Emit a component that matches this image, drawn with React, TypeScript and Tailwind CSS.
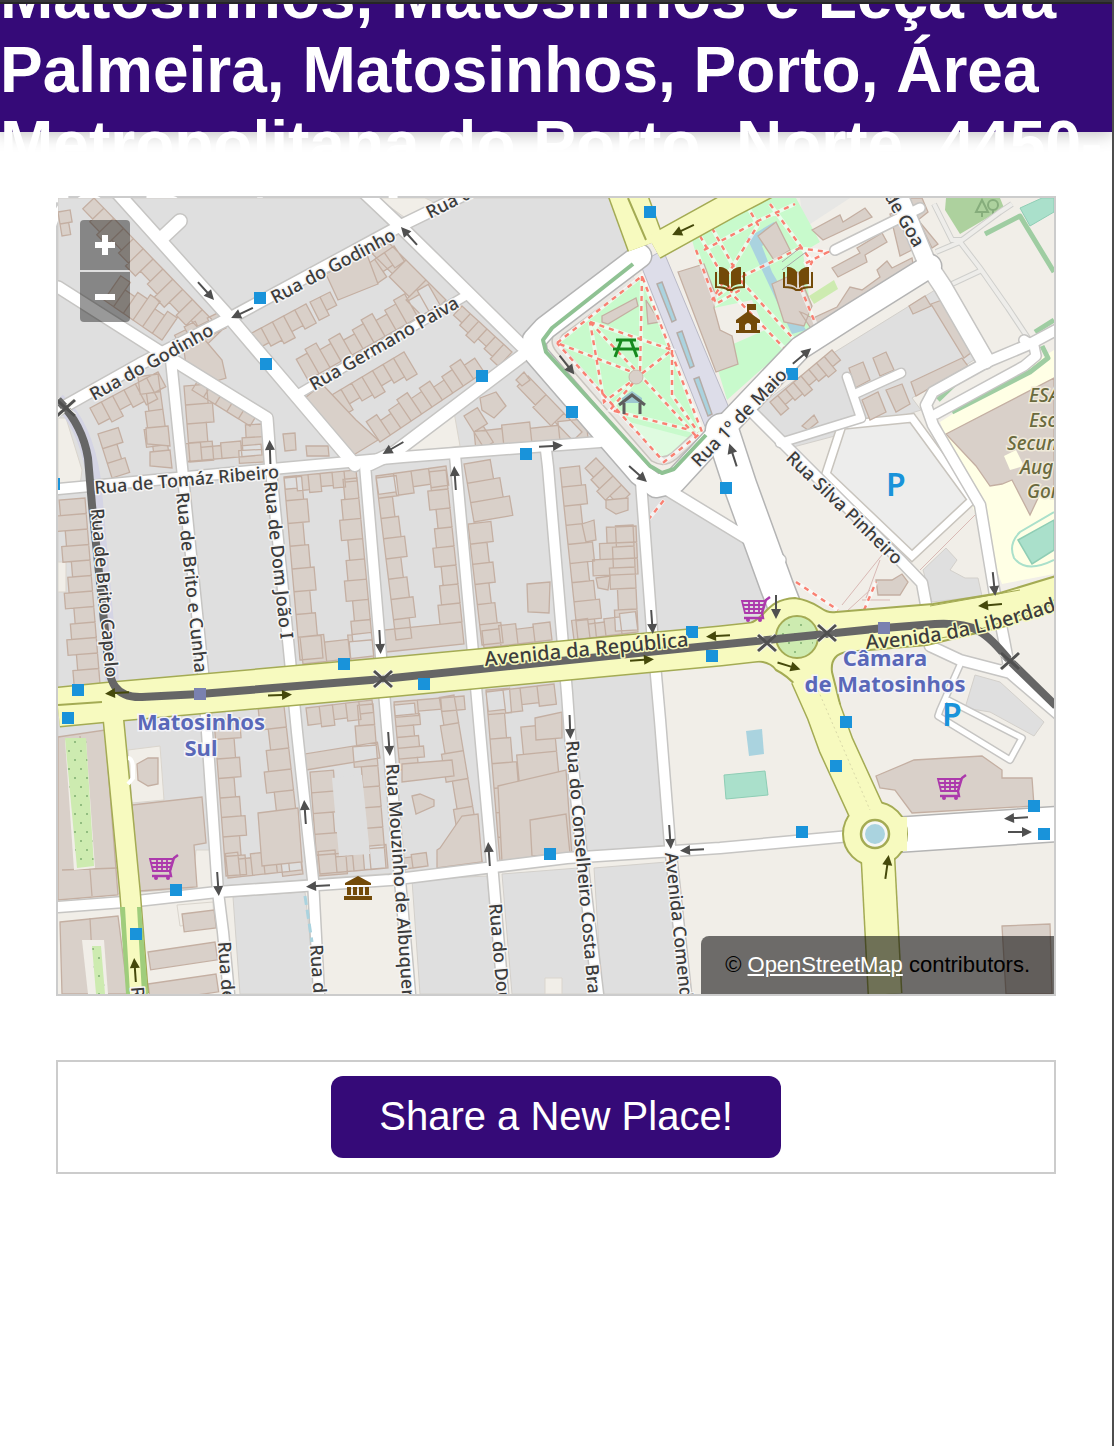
import React from "react";

type Pt = [number, number];

const path = (p: Pt[]) => "M" + p.map((q) => q.join(",")).join("L");
const parse = (s: string): Pt[] => s.split(" ").map((q) => q.split(",").map(Number) as Pt);

/* Ground cover */
const RESIDENTIAL = [
  "58,198 614,198 640,252 536,330 527,345 640,470 652,640 58,700",
  "645,490 672,490 750,545 772,606 755,622 655,636",
  "58,710 655,655 668,845 410,872 58,898",
  "233,897 305,892 316,994 240,994",
  "412,880 487,876 498,994 420,994",
  "502,874 578,868 594,994 512,994",
  "594,868 667,862 684,994 602,994",
  "753,410 830,355 935,290 980,350 974,360 912,398 921,410 865,428 782,450",
  "923,570 946,548 957,560 950,570 965,578 978,578 982,596 932,602",
  "975,675 1000,682 1044,722 1034,736 990,712 965,708",
];

const LOTS = [
  "378,198 425,198 440,205 408,220",
  "405,453 454,412 460,446 412,454",
  "58,418 66,418 82,470 80,486 58,486",
  "128,750 160,746 164,800 132,803",
  "58,592 66,592 66,562 58,562",
  "196,850 212,850 212,890 192,890",
  "177,905 213,902 214,922 180,926",
  "545,978 562,978 562,994 545,994",
];

const PARKS = [
  "700,236 760,198 796,198 820,242 803,252 813,326 790,344 727,400 718,370 737,362 731,345 765,330 752,300 714,308 706,290 692,240",
  "556,345 642,276 702,432 664,462 652,456",
];

const PARKING = "842,425 912,418 972,500 912,556 826,474";

/* Roads: points, width */
const STREETS: [string, number][] = [
  ["115,190 230,318 355,465", 15],
  ["58,410 140,364 230,318 400,226 486,184", 14],
  ["58,287 173,360 267,418 271,472", 14],
  ["171,360 182,467 203,672 207,732 218,892 223,932 229,994", 13],
  ["362,190 400,226 522,346", 15],
  ["300,393 467,295", 11],
  ["370,464 395,452 527,352", 15],
  ["58,489 283,468 403,457 600,442", 13],
  ["271,470 290,660 297,732 313,880 319,994", 13],
  ["365,465 383,680 400,880 410,994", 13],
  ["455,455 473,653 480,732 493,875 503,994", 13],
  ["546,450 548,467 567,693 570,735 583,868 598,994", 13],
  ["641,482 652,630 660,720 670,845 686,994", 13],
  ["58,907 137,901 217,892 390,880 567,858 720,848 850,836", 13],
  ["663,487 750,540 780,560", 14],
  ["900,198 927,263 943,287 985,360", 20],
  ["1060,328 1030,344 987,362 933,392 926,405 933,425 980,505 995,595 1004,640 1010,672", 13],
  ["936,414 1024,366 1036,356 1034,346 1024,340", 12],
  ["847,377 861,418 780,443", 11],
  ["857,393 901,373", 11],
  ["747,407 783,443 900,560 922,583 927,610", 13],
  ["930,646 960,660 1010,673 1058,714", 13],
  ["835,250 920,208", 12],
  ["960,665 940,710 938,716 1010,760 1022,738 948,700", 8],
  ["163,237 180,221", 16],
];

const AVENUES: [string, number][] = [
  ["640,256 545,328 534,340 536,354 640,474 656,486 674,482 720,432 800,348 850,316 930,266", 24],
  ["722,430 740,485 777,587 786,610", 34],
  ["880,836 1058,824", 36],
];

const YELLOW: [string, number][] = [
  ["626,190 646,245", 36],
  ["654,247 730,205 770,184", 24],
  ["58,707 110,702 390,677 720,646 800,637", 38],
  ["113,715 130,892 138,994", 19],
  ["808,676 824,712 836,745 868,815 875,834", 34],
  ["877,840 885,994", 32],
];

/* Building rows: line start, line end, signed depth, number of houses */
type Row = [number, number, number, number, number, number];
const ROWS: Row[] = [
  [94, 198, 222, 330, 20, 13],
  [58, 212, 62, 236, -10, 2],
  [104, 300, 162, 340, -26, 6],
  [182, 350, 226, 328, -16, 4],
  [90, 408, 158, 372, 20, 6],
  [250, 334, 306, 304, 20, 5],
  [310, 302, 330, 292, 16, 2],
  [365, 266, 394, 246, 18, 3],
  [308, 380, 440, 305, -22, 12],
  [320, 402, 404, 352, 20, 8],
  [386, 240, 446, 300, 22, 3],
  [462, 306, 512, 352, 16, 6],
  [380, 442, 484, 372, -20, 10],
  [158, 374, 170, 462, 18, 5],
  [184, 386, 190, 462, -22, 4],
  [192, 390, 250, 426, -14, 5],
  [262, 424, 264, 462, 20, 3],
  [182, 462, 262, 455, -14, 4],
  [98, 434, 112, 478, -18, 3],
  [85, 498, 100, 684, 24, 12],
  [284, 478, 300, 660, -18, 8],
  [284, 477, 356, 470, 14, 6],
  [357, 478, 374, 660, 18, 9],
  [303, 664, 374, 656, -22, 3],
  [376, 478, 396, 640, -18, 8],
  [376, 476, 446, 466, 18, 4],
  [446, 470, 462, 622, 18, 8],
  [464, 464, 474, 522, -32, 3],
  [468, 524, 482, 645, -18, 6],
  [386, 652, 464, 644, -22, 1],
  [484, 648, 552, 640, -16, 4],
  [560, 468, 578, 640, -20, 9],
  [633, 525, 638, 630, 20, 5],
  [636, 526, 638, 574, 38, 3],
  [574, 640, 638, 632, -16, 4],
  [464, 416, 484, 448, -14, 2],
  [476, 450, 588, 438, -18, 4],
  [528, 376, 582, 432, 16, 3],
  [596, 458, 630, 494, 18, 4],
  [214, 720, 226, 876, -20, 8],
  [284, 706, 303, 874, 22, 8],
  [306, 708, 372, 700, 16, 5],
  [310, 772, 318, 876, -24, 5],
  [306, 770, 380, 758, -16, 1],
  [373, 704, 386, 868, 20, 8],
  [228, 878, 302, 870, -20, 6],
  [320, 874, 388, 868, -20, 4],
  [394, 705, 400, 770, -20, 6],
  [398, 870, 428, 866, -12, 2],
  [454, 695, 482, 862, 18, 6],
  [394, 702, 464, 696, 12, 3],
  [486, 690, 500, 862, -20, 7],
  [486, 692, 554, 684, 18, 4],
  [554, 724, 567, 860, 34, 5],
  [182, 914, 214, 910, 18, 1],
  [148, 952, 215, 942, 18, 1],
  [148, 984, 216, 974, 18, 1],
  [770, 402, 832, 350, 15, 8],
];

const rowHouses = (r: Row, k: number) => {
  const [x1, y1, x2, y2, d, n] = r;
  const len = Math.hypot(x2 - x1, y2 - y1);
  const nx = (y2 - y1) / len;
  const ny = -(x2 - x1) / len;
  let out = "";
  for (let i = 0; i < n; i++) {
    const wob = n === 1 ? 1 : 0.78 + ((i * 37 + k * 53) % 11) / 20;
    const a = i / n;
    const b = (i + 1) / n;
    const dx = -nx * d * wob;
    const dy = -ny * d * wob;
    const p: Pt[] = [
      [x1 + (x2 - x1) * a, y1 + (y2 - y1) * a],
      [x1 + (x2 - x1) * b, y1 + (y2 - y1) * b],
      [x1 + (x2 - x1) * b + dx, y1 + (y2 - y1) * b + dy],
      [x1 + (x2 - x1) * a + dx, y1 + (y2 - y1) * a + dy],
    ];
    out += path(p) + "Z";
  }
  return out;
};

const BUILDINGS = [
  "326,274 366,252 378,284 338,300",
  "305,398 322,384 356,420 378,440 352,456 338,436",
  "183,342 205,340 222,360 226,378 206,384 186,366",
  "146,428 168,426 170,446 147,444",
  "150,452 170,450 172,468 150,466",
  "283,434 295,433 296,450 285,451",
  "306,446 328,446 329,456 307,456",
  "480,398 496,392 506,406 494,418 482,410",
  "516,380 524,372 530,380 522,386",
  "602,316 636,298 638,306 608,324 602,322",
  "646,300 660,322 648,324",
  "678,272 704,264 716,296 714,308 720,330 732,336 738,364 716,372",
  "527,584 550,582 549,613 528,612",
  "582,524 594,520 596,540 586,542",
  "606,500 628,498 628,510 616,514 606,508",
  "596,578 610,576 608,590 598,588",
  "412,796 420,794 434,800 434,806 416,814",
  "437,850 440,848 462,816 478,814 482,862 437,868",
  "402,764 452,760 454,776 402,782",
  "535,718 562,712 562,738 536,740",
  "498,786 566,770 572,856 502,862",
  "530,820 566,814 570,854 532,856",
  "132,805 202,797 206,843 194,845 197,887 139,891",
  "137,764 148,758 158,758 158,784 148,786 138,780",
  "58,737 105,730 118,895 58,900",
  "60,922 118,916 128,994 62,994",
  "258,813 298,808 302,862 262,866",
  "812,230 840,215 843,222 865,208 872,217 823,240",
  "832,268 860,253 857,248 882,233 887,242 865,255 867,262 838,277",
  "803,313 813,318 837,307 850,287 862,290 880,277 877,270 887,261 892,268 912,258 914,270 858,300 858,305 818,328 814,333 800,312",
  "890,214 902,210 912,250 900,256",
  "908,198 922,198 928,212 918,220 938,244 932,248",
  "758,236 776,222 790,250 774,260",
  "772,284 798,272 812,306 804,326 784,322",
  "909,306 925,296 931,306 913,314",
  "931,304 942,300 972,352 964,358",
  "911,382 962,358 968,366 916,396",
  "849,368 863,362 870,380 855,388",
  "873,358 886,352 894,370 880,376",
  "862,400 878,392 886,412 870,420",
  "886,390 902,384 910,404 896,412",
  "802,426 814,415 818,422 808,430",
  "946,434 1054,378 1054,490 1040,494 1030,515 1012,480 1002,484 990,486 976,466",
  "876,580 892,580 902,574 908,582 900,595 878,595",
  "876,776 914,760 982,756 1002,770 1002,778 1032,778 1034,806 912,813 895,790 880,788",
  "1002,926 1050,924 1052,994 1006,994",
];

const FOOTPATHS = [
  "557,343 642,276 702,432 664,462 557,343",
  "642,276 640,375 557,343",
  "590,322 640,375 696,436",
  "590,322 672,350 640,375 604,402 590,322",
  "672,350 672,395 698,432",
  "640,375 610,410 690,430",
  "700,236 734,296 786,350",
  "712,228 742,282 800,346",
  "696,250 716,304 740,290",
  "704,250 760,220 795,204",
  "746,204 758,225 712,300 745,275 800,248",
  "770,204 812,262 800,286 818,330",
  "798,248 828,252 804,264",
  "648,520 664,500",
  "796,582 838,610",
  "864,610 876,582",
];

const PARK_HEDGE = "633,264 552,328 543,340 546,352 650,466 662,473 674,469 706,435";

const HEDGES = [
  "985,234 1020,216 1054,272",
  "938,400 965,374 1020,352",
  "952,412 1030,372 1048,358 1042,346",
  "1035,332 1054,320",
];

const TREELINES = [
  "934,204 952,240 962,240 1000,212 1012,204",
  "936,252 960,242 980,268 1008,308 1028,338",
  "952,284 982,270",
];

const RAIL = "M58,400C72,414 84,434 88,458L92,505L107,650C108,684 116,698 142,697L200,694L383,679L767,640L884,628L935,624C974,622 984,630 1010,661L1056,706";

const STOPS: Pt[] = [
  [260, 298], [266, 364], [482, 376], [572, 412], [526, 454], [650, 212], [792, 374], [726, 488],
  [692, 632], [712, 656], [344, 664], [424, 684], [78, 690], [68, 718], [846, 722], [836, 766],
  [802, 832], [1034, 806], [1044, 834], [550, 854], [176, 890], [136, 934], [54, 484],
];

const ARROWS: [number, number, number, boolean?][] = [
  [206, 291, 48], [242, 313, 155], [409, 236, 228], [270, 452, -92], [393, 448, 150], [551, 446, -3],
  [567, 365, 52], [638, 474, 42], [455, 478, -94], [802, 356, -40], [733, 455, -108], [683, 230, 155, true],
  [776, 607, 90], [718, 636, 177, true], [642, 660, -4, true], [789, 666, 17, true], [990, 605, 175, true],
  [994, 584, 84], [380, 642, 87], [652, 622, 86], [117, 693, 177, true], [280, 695, -2, true],
  [570, 727, 88], [389, 744, 86], [305, 812, -94], [489, 854, -94], [670, 837, 86], [692, 850, 177],
  [218, 884, 86], [318, 886, 177], [887, 867, -82, true], [1016, 818, 177], [1020, 832, 0], [135, 970, -94, true],
];

const CROSSINGS: Pt[] = [[66, 408], [383, 679], [767, 643], [827, 633], [1010, 661]];

const LABELS: [string, number, number, number][] = [
  ["Rua do Godinho", 94, 401, -29],
  ["Rua do Godinho", 275, 304, -28],
  ["Rua d", 430, 219, -27],
  ["Rua Germano Paiva", 314, 391, -30],
  ["Rua de Tomáz Ribeiro", 95, 494, -5],
  ["Rua de Brito Capelo", 91, 509, 85],
  ["Rua de Brito e Cunha", 176, 493, 84],
  ["Rua de Dom João I", 264, 482, 84],
  ["Rua 1º de Maio", 699, 468, -46],
  ["de Goa", 884, 196, 60],
  ["Rua Silva Pinheiro", 785, 459, 44],
  ["Rua Mouzinho de Albuquer", 386, 764, 86],
  ["Rua do Dou", 489, 904, 85],
  ["Rua do Conselheiro Costa Bran", 566, 741, 85],
  ["Avenida Comend", 665, 853, 84],
  ["Rua de", 218, 942, 86],
  ["Rua d", 310, 945, 86],
];

const SCHOOL: [string, number, number][] = [
  ["ESA", 1029, 402], ["Esc", 1029, 427], ["Secun", 1007, 450], ["Aug", 1020, 474], ["Gom", 1027, 498],
];

function Cart({ x, y }: { x: number; y: number }) {
  return (
    <g transform={`translate(${x} ${y})`} fill="none" stroke="#ac39ac" strokeWidth="2">
      <path d="M1,4H24L21,16H4ZM2,8H23M3,12H22M8,4V16M13,4V16M18,4V16" strokeWidth="1.8" />
      <path d="M29,0L25,3L21,16L22,21H3" strokeWidth="2.4" />
      <circle cx="7" cy="23" r="2" fill="#ac39ac" stroke="none" />
      <circle cx="19" cy="23" r="2" fill="#ac39ac" stroke="none" />
    </g>
  );
}

function Library({ x, y }: { x: number; y: number }) {
  return (
    <g transform={`translate(${x} ${y})`} fill="#734a08">
      <path d="M3,-1C8,-1 11,1 13,4V20C10,17 7,16 3,16ZM25,-1C20,-1 17,1 15,4V20C18,17 21,16 25,16Z" />
      <path d="M0,4V19C6,19 10,20 12,22H16C18,20 22,19 28,19V4" fill="none" stroke="#734a08" strokeWidth="2" />
    </g>
  );
}

function MapDrawing() {
  return (
    <svg
      className="block h-full w-full"
      viewBox="58 198 996 796"
      preserveAspectRatio="xMidYMid slice"
      role="img"
      aria-label="Map of Matosinhos"
      fontFamily="'Noto Sans', sans-serif"
    >
      <defs>
        <pattern id="dots" width="12" height="18" patternUnits="userSpaceOnUse">
          <circle cx="3" cy="4" r="1" fill="#7fae70" />
          <circle cx="9" cy="13" r="1" fill="#7fae70" />
        </pattern>
        <path id="republica" d="M485,666L700,645" />
        <path id="liberdade" d="M866,649Q970,644 1080,602" />
      </defs>
      <rect x="58" y="198" width="996" height="796" fill="#f1eee8" />
      <path d={RESIDENTIAL.map((s) => path(parse(s)) + "Z").join("")} fill="#dfdfdf" stroke="#d3d0cb" />
      <path d={LOTS.map((s) => path(parse(s)) + "Z").join("")} fill="#f1eee8" stroke="#dad5cd" />
      <path d="M800,198H850L804,228Z" fill="#e7e7e5" />
      <path d="M1054,350L940,422L1002,584L1054,574Z" fill="#ffffe5" />
      <path d={PARKS.map((s) => path(parse(s)) + "Z").join("")} fill="#c8facc" />
      <path d="M614,418L690,438L664,460Z" fill="#dffbe0" />
      <path d="M946,198H1000L1004,208L960,234L945,210Z" fill="#add19e" />
      <g fill="none" stroke="#86ad7c" strokeWidth="2">
        <path d="M982,200L976,212H988ZM982,212V217M993,210V217" />
        <circle cx="993" cy="205" r="5" />
      </g>
      <path d="M1020,208L1042,198H1054V212L1030,226Z" fill="#aae0cb" stroke="#8fcdb5" />
      <path d="M747,238L774,222L780,232L762,246L772,272L806,330L792,334Z" fill="#aad3df" />
      <path d="M809,296L834,280L838,289L814,304Z" fill="#cdebb0" />
      <path d={path(parse(PARKING)) + "Z"} fill="#ededec" stroke="#c8c4bd" strokeWidth="10" />
      <path d={path(parse(PARKING)) + "Z"} fill="none" stroke="#fff" strokeWidth="7" />
      <path d="M842,605L882,555M866,598L880,560M862,600H890M978,512L920,570M846,612L870,590" fill="none" stroke="#d9b9b5" strokeWidth="1" />
      <path d={ROWS.map(rowHouses).join("")} fill="#d9d0c9" stroke="#c4afa2" strokeWidth="1.3" />
      <path d={BUILDINGS.map((s) => path(parse(s)) + "Z").join("")} fill="#d9d0c9" stroke="#c4afa2" strokeWidth="1.3" />
      <path d="M1004,456L1016,450L1024,466L1010,470Z" fill="#ffffe5" />
      <path d="M80,736L92,896M62,870L118,868M90,918L94,994" fill="none" stroke="#c4afa2" strokeWidth="1.3" />
      <path d="M65,740H86L95,868L74,870Z" fill="#f1eee8" />
      <path d="M65,738H86L94,866L77,868Z" fill="#cdebb0" />
      <path d="M65,738H86L94,866L77,868Z" fill="url(#dots)" />
      <path d="M82,940H104L108,994H88Z" fill="#f1eee8" />
      <path d="M92,946H101L105,994H96Z" fill="#cdebb0" />
      <path d="M92,946H101L105,994H96Z" fill="url(#dots)" />
      <path d="M332,778L362,775L370,854L339,856Z" fill="#dfdfdf" />
      <path d="M746,731L762,729L764,754L749,756Z" fill="#aad3df" />
      <path d="M724,775L765,771L768,795L726,799Z" fill="#aae0cb" stroke="#8fcdb5" />
      <path d="M1018,540L1054,520V550L1032,564Z" fill="#aae0cb" stroke="#8fcdb5" strokeWidth="1.5" />
      <path d="M1054,512L1020,532Q1008,544 1014,558Q1026,574 1054,560" fill="none" stroke="#aae0cb" strokeWidth="2" />
      <path d="M640,263L663,250L729,408L708,434Z" fill="#dddde9" stroke="#b9b9c6" />
      <g fill="#aad3df" stroke="#b5aca7" strokeWidth="1.5">
        <path d="M657,284L662,282L676,320L672,322ZM677,333L682,331L694,366L690,368ZM694,379L699,377L712,414L708,416Z" />
      </g>
      <path d="M58,400C76,416 88,440 94,480L112,680" fill="none" stroke="#d4d4e4" strokeWidth="14" />
      <path d={HEDGES.map((s) => path(parse(s))).join("")} fill="none" stroke="#9fcda2" strokeWidth="5" strokeLinejoin="round" />
      <path d="M634,278L560,332Q552,341 560,350L654,458Q664,464 674,456L698,434" fill="none" stroke="#c9c5bf" strokeWidth="9" />
      <path d="M634,278L560,332Q552,341 560,350L654,458Q664,464 674,456L698,434" fill="none" stroke="#e9e7e3" strokeWidth="6" />
      <path d={TREELINES.map((s) => path(parse(s))).join("")} fill="none" stroke="#cfcfcc" strokeWidth="6" />
      <path d={TREELINES.map((s) => path(parse(s))).join("")} fill="none" stroke="#eeedea" strokeWidth="4" />
      <path d={FOOTPATHS.map((s) => path(parse(s))).join("")} fill="none" stroke="#fff" strokeOpacity="0.6" strokeWidth="4" />
      <path d={FOOTPATHS.map((s) => path(parse(s))).join("")} fill="none" stroke="#fa8072" strokeWidth="2.4" strokeDasharray="5 5" />
      <circle cx="636" cy="377" r="7" fill="#d9d0c9" stroke="#c9b6ab" />
      <path d="M782,262L800,248M782,270L806,252" stroke="#a9a9a9" strokeWidth="1" />

      <g fill="none" strokeLinecap="round" strokeLinejoin="round">
        {STREETS.map(([s, w], i) => <path key={"a" + i} d={path(parse(s))} stroke="#c6c5c3" strokeWidth={w} />)}
        {AVENUES.map(([s, w], i) => <path key={"b" + i} d={path(parse(s))} stroke="#b4b4b4" strokeWidth={w + 1} />)}
        {STREETS.map(([s, w], i) => <path key={"c" + i} d={path(parse(s))} stroke="#fff" strokeWidth={w - 3} />)}
        {AVENUES.map(([s, w], i) => <path key={"d" + i} d={path(parse(s))} stroke="#fff" strokeWidth={w - 2} />)}
      </g>
      <path d={path(parse(PARK_HEDGE))} fill="none" stroke="#8fc293" strokeWidth="4" strokeLinejoin="round" />
      <g fill="none" strokeLinejoin="round" stroke="#a4ab54">
        {YELLOW.map(([s, w], i) => <path key={i} d={path(parse(s))} strokeWidth={w + 3} />)}
      </g>
      <path
        d="M740,626C768,622 762,600 795,598C822,602 820,614 836,612L933,604L1000,593L1056,576V602L1010,625L927,645L846,652Q830,655 832,672L840,704L812,714Q800,682 776,670Q768,658 740,662Z"
        fill="#f7fabf"
        stroke="#a4ab54"
        strokeWidth="2"
      />
      <circle cx="875" cy="834" r="32" fill="#f7fabf" stroke="#a4ab54" strokeWidth="2" />
      <g fill="none" strokeLinejoin="round" stroke="#f7fabf">
        {YELLOW.map(([s, w], i) => <path key={i} d={path(parse(s))} strokeWidth={w} />)}
        <path d="M896,834H907" strokeWidth="34" />
      </g>
      <path d="M120,907L126,994H130L125,907ZM137,907L142,994H148L141,907Z" fill="#9fcd7c" />
      <path d="M58,705L102,702M628,198L646,240" stroke="#a4ab54" strokeWidth="2" />
      <path d="M818,690L870,810" stroke="#d9d9a8" strokeWidth="1" strokeDasharray="2 3" />
      <path d="M930,606L1020,590M930,640Q990,632 1054,600" fill="none" stroke="#a4ab54" strokeWidth="1" />
      <circle cx="875" cy="834" r="14" fill="#f7f7f5" stroke="#a4ab54" strokeWidth="2.5" />
      <circle cx="875" cy="834" r="10" fill="#aad3df" />
      <circle cx="797" cy="637" r="21" fill="#cdebb0" stroke="#a4ab54" strokeWidth="2" />
      <circle cx="797" cy="637" r="17" fill="url(#dots)" />
      <path d="M128,758Q132,758 133,766V778L128,784" fill="none" stroke="#fff" strokeWidth="4" />
      <path d={RAIL} fill="none" stroke="#666" strokeWidth="8" />
      <path d="M305,896L312,942" stroke="#aad3df" strokeWidth="3" strokeDasharray="9 5" />

      <g stroke="#f4f4ee" strokeWidth="5">
        {CROSSINGS.map(([x, y], i) => <path key={i} d={`M${x - 9},${y - 8}L${x + 9},${y + 8}M${x - 9},${y + 8}L${x + 9},${y - 8}`} />)}
      </g>
      <path d={RAIL} fill="none" stroke="#666" strokeWidth="6" />
      <g stroke="#505050" strokeWidth="3">
        {CROSSINGS.map(([x, y], i) => <path key={i} d={`M${x - 9},${y - 8}L${x + 9},${y + 8}M${x - 9},${y + 8}L${x + 9},${y - 8}`} />)}
      </g>
      {ARROWS.map(([x, y, a, dark], i) => (
        <g key={i} transform={`translate(${x} ${y}) rotate(${a})`} fill={dark ? "#45490b" : "#505050"}>
          <path d="M-12,-1H2V-5L12,0L2,5V1H-12Z" />
        </g>
      ))}
      <g fill="#1993da">
        {STOPS.map(([x, y], i) => <path key={i} d={`M${x - 6},${y - 6}h12v12h-12Z`} />)}
      </g>
      <path d="M194,688h12v12h-12ZM878,622h12v12h-12Z" fill="#7a81b0" />

      <Library x={716} y={268} />
      <Library x={784} y={268} />
      <path d="M747,304H756V310H749V312L760,320V323H757V330H760V333H736V330H739V323H736V320L747,312ZM745,330H751V325Q748,321 745,325Z" fill="#734a08" />
      <path d="M358,876L371,883V885H345V883ZM347,887H351V895H347ZM353,887H357V895H353ZM359,887H363V895H359ZM365,887H369V895H365ZM344,896H372V900H344Z" fill="#734a08" />
      <path d="M616,340H636M613,349H639M621,341L615,357M631,341L637,357" stroke="#168a1e" strokeWidth="3" />
      <path d="M622,398L632,391L642,398V403H622Z" fill="#9cc6cf" />
      <path d="M619,405L632,395L645,405M624,403V414M640,403V414" fill="none" stroke="#5d5d5d" strokeWidth="3" />
      <Cart x={149} y={855} />
      <Cart x={741} y={597} />
      <Cart x={937} y={775} />
      <g fill="#1993da" fontSize="32" fontWeight="600">
        <text x="886" y="496">P</text>
        <text x="942" y="726">P</text>
      </g>

      <g fill="#3c3c3c" stroke="#f5f5f5" strokeWidth="3" strokeLinejoin="round" paintOrder="stroke" fontSize="18" fontWeight="500">
        {LABELS.map(([t, x, y, a], i) => (
          <text key={i} transform={`translate(${x} ${y}) rotate(${a})`}>{t}</text>
        ))}
        <g stroke="#f7fabf" fontSize="20">
          <text><textPath href="#republica">Avenida da República</textPath></text>
          <text><textPath href="#liberdade">Avenida da Liberdad</textPath></text>
        </g>
        <text transform="translate(131 987) rotate(86)">R</text>
      </g>
      <g fill="#5a68b8" stroke="#f4f4f8" strokeWidth="3" paintOrder="stroke" fontSize="22" fontWeight="700" textAnchor="middle">
        <text x="201" y="730">Matosinhos</text>
        <text x="201" y="756">Sul</text>
        <text x="885" y="666">Câmara</text>
        <text x="885" y="692">de Matosinhos</text>
      </g>
      <g fill="#6a6a3e" stroke="#f0ead9" strokeWidth="3" paintOrder="stroke" fontSize="19" fontStyle="italic" fontWeight="500">
        {SCHOOL.map(([t, x, y]) => <text key={t} x={x} y={y}>{t}</text>)}
      </g>
    </svg>
  );
}

const zoomButton = "flex h-[50px] w-[50px] items-center justify-center bg-black/40 text-white";

export default function App() {
  return (
    <div className="min-h-screen overflow-hidden border-r-2 border-[#4d4d4d] bg-white font-['Liberation_Sans',Arial,sans-serif]">
      <div className="relative z-30 h-1 border-b-2 border-[#262626] bg-[#38383b]" />
      <header className="relative z-10 flex h-32 items-start bg-[#350a78] shadow-[0_2px_16px_rgba(0,0,0,0.26)]">
        <h1 className="-mt-[45px] text-[64px] leading-[74px] font-bold text-white">
          Matosinhos, Matosinhos e Leça da Palmeira, Matosinhos, Porto, Área Metropolitana do Porto, Norte, 4450-278, Portugal
        </h1>
      </header>
      <main className="mx-14 mt-16 flex flex-col gap-16">
        <section className="h-[800px] border-2 border-[#ccc]">
          <div className="relative z-20 h-full overflow-hidden">
            <MapDrawing />
            <div className="absolute top-[22px] left-[22px] flex flex-col gap-[2px]">
              <button type="button" aria-label="Zoom in" className={zoomButton + " rounded-t"}>
                <svg className="h-5 w-5" viewBox="0 0 20 20" aria-hidden="true"><path d="M10,0V20M0,10H20" stroke="currentColor" strokeWidth="6" /></svg>
              </button>
              <button type="button" aria-label="Zoom out" className={zoomButton + " rounded-b"}>
                <svg className="h-5 w-5" viewBox="0 0 20 20" aria-hidden="true"><path d="M0,10H20" stroke="currentColor" strokeWidth="6" /></svg>
              </button>
            </div>
            <p className="absolute right-0 bottom-0 rounded-tl-lg bg-black/55 px-6 py-3 text-[22px] leading-[34px] text-black">
              © <a href="https://www.openstreetmap.org/copyright" className="text-white underline underline-offset-2">OpenStreetMap</a> contributors.
            </p>
          </div>
        </section>
        <section className="flex justify-center border-2 border-[#ccc] py-[14px]">
          <button type="button" className="rounded-xl bg-[#350a78] px-12 pt-[15px] pb-[17px] text-[40px] leading-[50px] text-white">
            Share a New Place!
          </button>
        </section>
      </main>
    </div>
  );
}
